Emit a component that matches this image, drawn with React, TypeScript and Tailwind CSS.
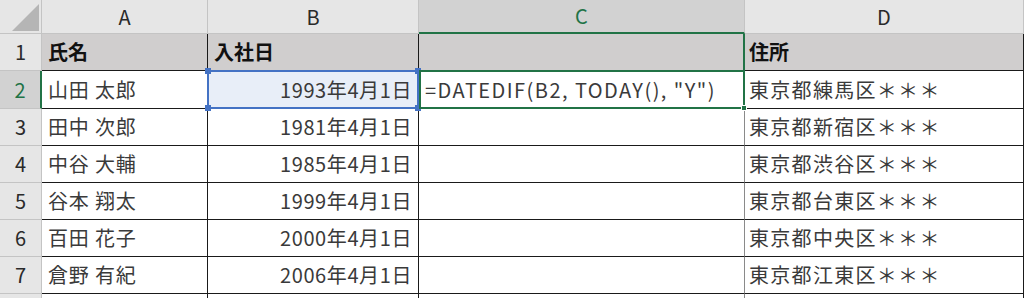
const data = [
  ['山田 太郎', '1993年4月1日', '=DATEDIF(B2, TODAY(), "Y")', '東京都練馬区＊＊＊'],
  ['田中 次郎', '1981年4月1日', '', '東京都新宿区＊＊＊'],
  ['中谷 大輔', '1985年4月1日', '', '東京都渋谷区＊＊＊'],
  ['谷本 翔太', '1999年4月1日', '', '東京都台東区＊＊＊'],
  ['百田 花子', '2000年4月1日', '', '東京都中央区＊＊＊'],
  ['倉野 有紀', '2006年4月1日', '', '東京都江東区＊＊＊'],
  ['', '', '', ''],
];

const font = { fontFamily: '"Noto Sans CJK JP", "Noto Sans", sans-serif' };

function Corner() {
  return (
    <div className="bg-[#e6e6e6] border-r border-b border-[#c4c4c4] flex items-end justify-end pr-[2px] pb-[2px]">
      <svg width="27" height="27" viewBox="0 0 27 27">
        <polygon points="0,27 27,0 27,27" fill="#b5b5b5" />
      </svg>
    </div>
  );
}

function ColHeader({ label, active }: { label: string; active?: boolean }) {
  return (
    <div
      className={
        active
          ? 'bg-[#d2d2d2] border-r border-[#c4c4c4] border-b-2 border-b-[#217346] text-[#217346] flex items-center justify-center text-[20px]'
          : 'bg-[#e6e6e6] border-r border-b border-[#c4c4c4] text-[#2a2a2a] flex items-center justify-center text-[20px]'
      }
    >
      {label}
    </div>
  );
}

function RowHeader({ n, active }: { n: string; active?: boolean }) {
  return (
    <div
      className={
        active
          ? 'bg-[#d2d2d2] border-r-2 border-r-[#217346] border-b border-b-[#c4c4c4] text-[#217346] flex items-center justify-center text-[20px]'
          : 'bg-[#e6e6e6] border-r border-b border-[#c4c4c4] text-[#2a2a2a] flex items-center justify-center text-[20px]'
      }
    >
      {n}
    </div>
  );
}

export default function App() {
  return (
    <div className="w-[1024px] h-[298px] overflow-hidden bg-white" style={font}>
      <div className="grid grid-cols-[42px_166px_211px_326px_279px] grid-rows-[34px_37px_38px_37px_37px_37px_37px_37px_37px]">
        <Corner />
        <ColHeader label="A" />
        <ColHeader label="B" />
        <ColHeader label="C" active />
        <ColHeader label="D" />

        <RowHeader n="1" />
        <div className="bg-[#d0cece] border-r border-b border-[#1a1a1a] flex items-center pl-[6px] text-[20px] font-bold text-[#111]">氏名</div>
        <div className="bg-[#d0cece] border-r border-b border-[#1a1a1a] flex items-center pl-[6px] text-[20px] font-bold text-[#111]">入社日</div>
        <div className="bg-[#d0cece] border-r-2 border-r-[#217346] border-b border-b-[#1a1a1a]"></div>
        <div className="bg-[#d0cece] border-r border-b border-[#1a1a1a] flex items-center pl-[4px] text-[20px] font-bold text-[#111]">住所</div>

        {data.map((r, i) => {
          const first = i === 0;
          const last = i === data.length - 1;
          return [
            <RowHeader key={`h${i}`} n={last ? '' : String(i + 2)} active={first} />,
            <div key={`a${i}`} className="border-r border-b border-[#1a1a1a] flex items-center pl-[6px] text-[20px] tracking-[0.8px] text-[#3a3a3a] whitespace-nowrap">
              {r[0]}
            </div>,
            first ? (
              <div key={`b${i}`} className="relative bg-[#e8eef8] border-r border-b border-[#1a1a1a] flex items-center justify-end pr-[6px] text-[20px] tracking-[0.6px] text-[#3a3a3a] whitespace-nowrap">
                {r[1]}
                <div className="absolute -left-[1px] -top-[1px] -right-[1px] -bottom-[1px] border-2 border-[#4472c4]"></div>
                <div className="absolute -left-[3px] -top-[3px] w-[6px] h-[6px] bg-[#4472c4]"></div>
                <div className="absolute -right-[3px] -top-[3px] w-[6px] h-[6px] bg-[#4472c4]"></div>
                <div className="absolute -left-[3px] -bottom-[3px] w-[6px] h-[6px] bg-[#4472c4]"></div>
                <div className="absolute -right-[3px] -bottom-[3px] w-[6px] h-[6px] bg-[#4472c4]"></div>
              </div>
            ) : (
              <div key={`b${i}`} className="border-r border-b border-[#1a1a1a] flex items-center justify-end pr-[6px] text-[20px] tracking-[0.6px] text-[#3a3a3a] whitespace-nowrap">
                {r[1]}
              </div>
            ),
            first ? (
              <div key={`c${i}`} className="relative border-2 border-[#217346] -mt-[1px] flex items-center pl-[4px] text-[20px] tracking-[1.45px] text-[#3a3a3a] whitespace-nowrap">
                {r[2]}
                <div className="absolute -right-[4px] -bottom-[4px] w-[6px] h-[6px] bg-[#217346] border border-white"></div>
              </div>
            ) : (
              <div key={`c${i}`} className="border-r border-r-[#8a8a8a] border-b border-b-[#1a1a1a]"></div>
            ),
            <div key={`d${i}`} className="border-r border-b border-[#1a1a1a] flex items-center pl-[4px] text-[20px] tracking-[1.3px] text-[#3a3a3a] whitespace-nowrap">
              {r[3]}
            </div>,
          ];
        })}
      </div>
    </div>
  );
}
